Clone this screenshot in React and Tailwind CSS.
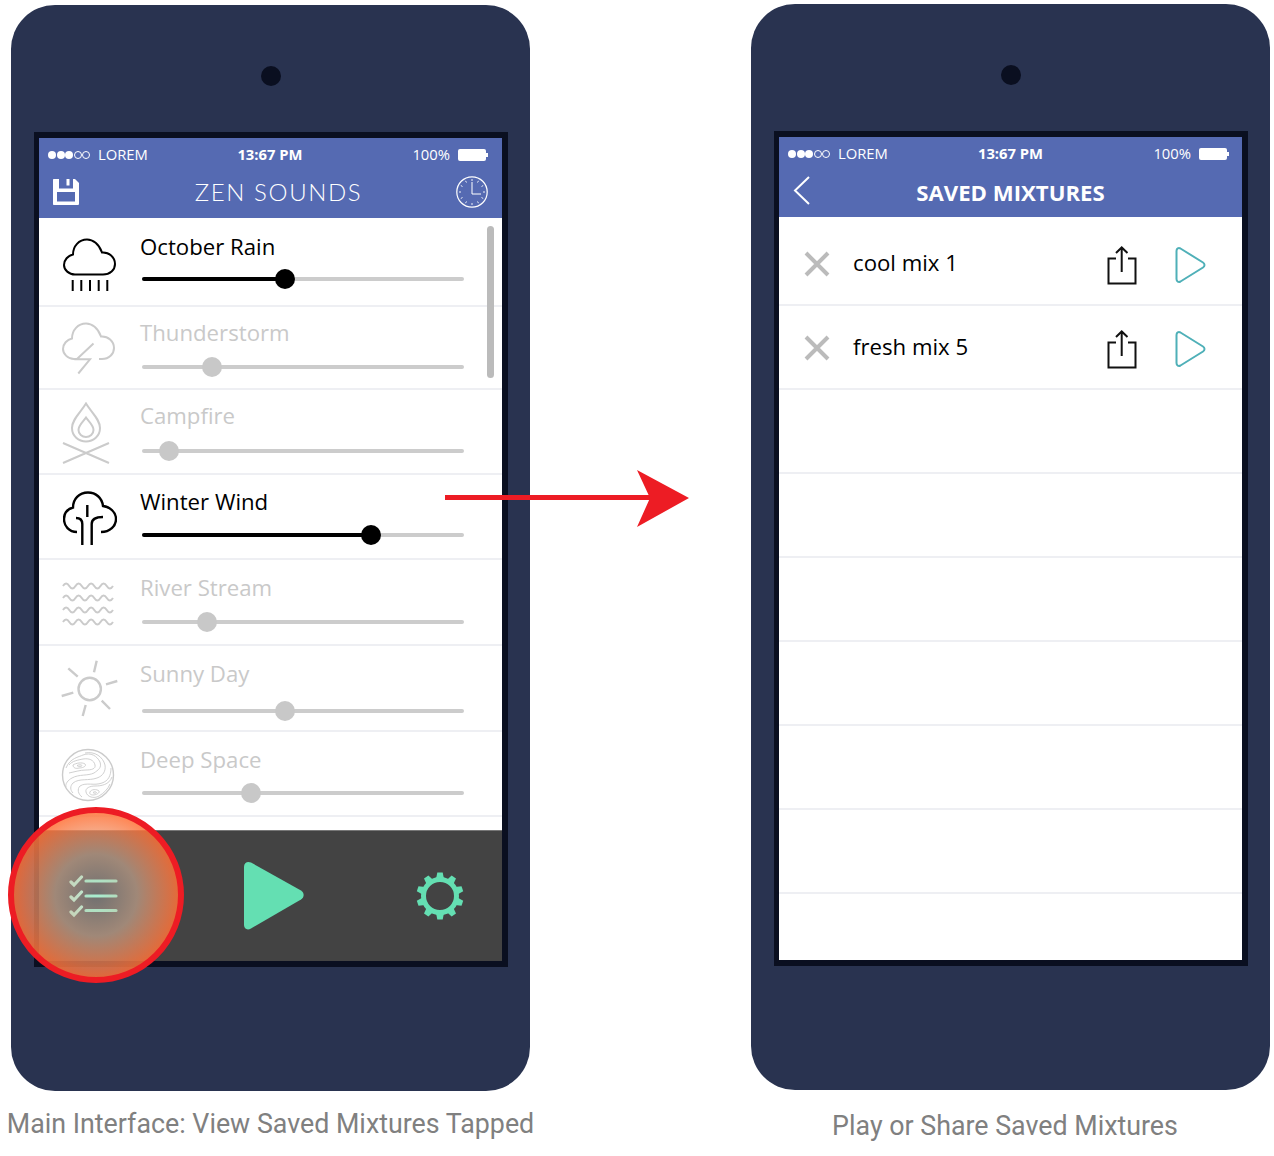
import React from 'react';

const GRAY = '#cbcbcb';

// wavy lines for the river icon
const wave = (y) => `M1 ${y} q3.1 -5 6.25 0 t6.25 0 t6.25 0 t6.25 0 t6.25 0 t6.25 0 t6.25 0 t6.25 0`;

const RainIcon = () => (
  <svg width="54" height="54" viewBox="0 0 54 54" fill="none" stroke="#000" strokeWidth="2">
    <path d="M12 36.5H40C47 36.5 52 32 52 26C52 19 46 14 39 14.5C36 6 30 1.5 24 1.5C16 1.5 10 8 10 16.5C5 17.5 1 22 1 27C1 32 6 36.5 12 36.5Z" />
    <path d="M9.7 42v11M18.3 42v11M27 42v11M35.7 42v11M44.3 42v11" />
  </svg>
);

const StormIcon = () => (
  <svg width="54" height="54" viewBox="0 0 54 54" fill="none" stroke={GRAY} strokeWidth="2">
    <path d="M37 37H40C47 37 52 32 52 26C52 19 46 14 39 14.5C36 6 30 1.5 24 1.5C16 1.5 10 8 10 16.5C5 17.5 1 22 1 27C1 32 6 37 12 37H15" />
    <path d="M31.5 21.5L14.7 37.3H28L16.3 51.5" />
  </svg>
);

const FireIcon = () => (
  <svg width="50" height="64" viewBox="0 0 50 64" fill="none" stroke={GRAY} strokeWidth="2">
    <path d="M25 1.5C20 10 11 17 11 26C11 34 17.5 39.5 25 39.5C32.5 39.5 39 34 39 26C39 17 30 10 25 1.5Z" />
    <path d="M25 15.5C22 20 17.5 23 17.5 28C17.5 32 21 35 25 35C29 35 32.5 32 32.5 28C32.5 23 28 20 25 15.5Z" />
    <path d="M2 41L48 61M48 41L2 61" />
  </svg>
);

const TreeIcon = () => (
  <svg width="54" height="55" viewBox="0 0 54 55" fill="none" stroke="#000" strokeWidth="2.4">
    <path d="M14 41C6 41 1 35 1 28C1 22 5 18 10 16.5C10 8 16 1.5 25 1.5C33 1.5 39 7 40 15C47 16 53 21 53 28C53 35 47 41 38 41" />
    <path d="M19.3 54V33C19.3 29 17 27 13 27M28.7 54V33C28.7 29 32 26 40 26M24.3 14V26" />
  </svg>
);

const RiverIcon = () => (
  <svg width="52" height="48" viewBox="0 0 52 48" fill="none" stroke={GRAY} strokeWidth="2">
    <path d={wave(6)} />
    <path d={wave(18)} />
    <path d={wave(30)} />
    <path d={wave(42)} />
  </svg>
);

const SunIcon = () => (
  <svg width="60" height="60" viewBox="0 0 60 60" fill="none" stroke={GRAY} strokeWidth="2.4">
    <circle cx="29.7" cy="30" r="11.2" />
    <path d="M36.7 1.7L34 13.3M8.3 9.3L17.7 17.7M1.7 37L13.3 33.7M22.7 57L25.7 46M50 50L41.7 41.7M57.3 22L46 25.3" />
  </svg>
);

const PlanetIcon = () => (
  <svg width="54" height="54" viewBox="0 0 54 54" fill="none" stroke={GRAY} strokeWidth="0.9">
    <circle cx="27" cy="27" r="25.5" strokeWidth="1.4" />
    <path d="M5 20C9 10 18 9 22 7C30 4 36 8 39 14C41 20 37 22 33 25C27 28 18 26 11 30C7 32 4 36 5 39" />
    <path d="M8 17C11 13 17 12 22 11C28 10 33 12 34 17C35 21 30 22 25 22C19 22 13 24 8 25" />
    <path d="M12 17C15 15 21 14 24 16C26 18 22 20 18 20C15 21 12 20 12 17Z" />
    <path d="M16 17.500C18 16.500 21 16.500 21 17.500C21 18.500 17 19 16 17.500Z" />
    <path d="M24 5C34 3 42 9 44 17C45 23 42 28 36 30C28 33 18 30 12 35C9 38 9 42 12 45" />
    <path d="M50 20C50 28 47 33 41 35C33 38 25 34 19 38C16 41 17 46 21 49" />
    <path d="M51 29C48 37 40 38 34 38C29 38 24 40 25 44C26 49 33 51 38 48C43 45 47 41 49 36" />
    <path d="M29 44C30 41 36 41 38 43C39 45 35 47 32 47C30 47 28 46 29 44Z" />
    <path d="M32 44.500C33 43.500 35 43.500 35.500 44.500C35 45.500 33 45.500 32 44.500Z" />
  </svg>
);

const channels = [
  { name: 'October Rain', Icon: RainIcon, on: true, thumb: 143, row: 'h-[89px]', icon: 'ml-[24px] mt-[20px]', text: 'pt-[14px]', track: 'mt-[15px]' },
  { name: 'Thunderstorm', Icon: StormIcon, on: false, thumb: 70, row: 'h-[83px]', icon: 'ml-[23px] mt-[15px]', text: 'pt-[11px]', track: 'mt-[17px]' },
  { name: 'Campfire', Icon: FireIcon, on: false, thumb: 27, row: 'h-[85px]', icon: 'ml-[22px] mt-[12px]', text: 'pt-[11px]', track: 'mt-[18px]' },
  { name: 'Winter Wind', Icon: TreeIcon, on: true, thumb: 229, row: 'h-[85px]', icon: 'ml-[24px] mt-[16px]', text: 'pt-[12px]', track: 'mt-[16px]' },
  { name: 'River Stream', Icon: RiverIcon, on: false, thumb: 65, row: 'h-[86px]', icon: 'ml-[23px] mt-[20px]', text: 'pt-[13px]', track: 'mt-[17px]' },
  { name: 'Sunny Day', Icon: SunIcon, on: false, thumb: 143, row: 'h-[86px]', icon: 'ml-[21px] mt-[13px]', text: 'pt-[13px]', track: 'mt-[20px]' },
  { name: 'Deep Space', Icon: PlanetIcon, on: false, thumb: 109, row: 'h-[85px]', icon: 'ml-[22px] mt-[16px]', text: 'pt-[13px]', track: 'mt-[16px]' },
];

const StatusBar = ({ right }) => (
  <div className={`grid h-[34px] grid-cols-3 items-center pb-px pl-[9px] ${right} font-['Open_Sans'] text-[14.8px] text-white`}>
    <div className="flex items-center">
      <div className="flex gap-[0.5px]">
        <span className="h-2 w-2 rounded-full bg-white" />
        <span className="h-2 w-2 rounded-full bg-white" />
        <span className="h-2 w-2 rounded-full bg-white" />
        <span className="h-2 w-2 rounded-full border border-white" />
        <span className="h-2 w-2 rounded-full border border-white" />
      </div>
      <span className="ml-2">LOREM</span>
    </div>
    <div className="pl-[4px] text-center font-bold">13:67 PM</div>
    <div className="flex items-center justify-end">
      <span>100%</span>
      <span className="ml-2 h-[12px] w-[28px] rounded-[2px] bg-white" />
      <span className="h-[4px] w-[2px] bg-white" />
    </div>
  </div>
);

const Slider = ({ on, thumb, className }) => (
  <div className={`relative ml-[2px] h-[4px] w-[322px] rounded-full bg-[#cccccc] ${className}`}>
    {on && <div className="absolute left-0 top-0 h-[4px] rounded-full bg-black" style={{ width: thumb }} />}
    <div
      className={`absolute top-[-8px] ml-[-10px] h-5 w-5 rounded-full ${on ? 'bg-black' : 'bg-[#c8c8c8]'}`}
      style={{ left: thumb }}
    />
  </div>
);

const Channel = ({ name, Icon, on, thumb, row, icon, text, track }) => (
  <div className={`flex border-b-2 border-[#eeeff3] ${row}`}>
    <div className="w-[101px] shrink-0">
      <div className={icon}>
        <Icon />
      </div>
    </div>
    <div className={text}>
      <div className={`font-['Open_Sans'] text-[22.2px] leading-[30px] ${on ? 'text-black' : 'text-[#c9c9c9]'}`}>{name}</div>
      <Slider on={on} thumb={thumb} className={track} />
    </div>
  </div>
);

const Gear = () => (
  <svg width="48" height="48" viewBox="-24 -24 48 48" fill="none">
    <circle r="16.500" stroke="#64dfb2" strokeWidth="5" />
    {[0, 36, 72, 108, 144, 180, 216, 252, 288, 324].map((deg) => (
      <path key={deg} d="M-4 -17L-2.700 -23.500H2.700L4 -17Z" fill="#64dfb2" transform={`rotate(${deg})`} />
    ))}
  </svg>
);

const MainScreen = () => (
  <div className="relative flex h-full flex-col">
    <div className="h-[80px] bg-[#556ab2]">
      <StatusBar right="pr-[14px]" />
      <div className="flex h-[46px] items-center pb-[6px] pl-[13px] pr-[14px]">
        <svg width="28" height="28" viewBox="0 0 28 28">
          <path
            fillRule="evenodd"
            fill="#fff"
            d="M2 1H23L27 5V25.500C27 26.500 26.500 27 25.500 27H2C1.300 27 1 26.500 1 26V2C1 1.300 1.300 1 2 1ZM7 1V10.500H21V1H17.500V7.500H14.500V1ZM5 14V23.500H23V14Z"
          />
        </svg>
        <div className="flex-1 pl-[21px] text-center font-['Lato'] text-[24px] font-light tracking-[1.6px] text-white">
          ZEN SOUNDS
        </div>
        <svg width="32" height="32" viewBox="0 0 32 32" fill="none" stroke="#fff">
          <circle cx="16" cy="16" r="15.200" strokeWidth="1.200" />
          <path d="M16 6V18H25" strokeWidth="1" />
          <path d="M16 3v2M16 27v2M3 16h2M27 16h2M9.500 4.800l1 1.700M22.500 4.800l-1 1.700M9.500 27.200l1-1.700M22.500 27.200l-1-1.700M4.800 9.500l1.700 1M27.200 9.500l-1.700 1M4.800 22.500l1.700-1M27.200 22.500l-1.700-1" strokeWidth="0.900" />
        </svg>
      </div>
    </div>

    <div className="flex-1 bg-white">
      {channels.map((c) => (
        <Channel key={c.name} {...c} />
      ))}
    </div>

    {/* scrollbar */}
    <div className="absolute left-[448px] top-[88px] h-[152px] w-[7px] rounded-full bg-[#bbbbbb]" />

    <div className="flex h-[131px] items-center border-t border-[#777777] bg-[#434343] pl-[30px] pr-[38px]">
      <svg width="49" height="44" viewBox="0 0 49 44" fill="none" strokeLinecap="round">
        <g stroke="#a8ecce" strokeWidth="3.200">
          <path d="M2 8L5 11L12.500 3M2 23L5 26L12.500 18M2 38L5 41L12.500 33" />
        </g>
        <g stroke="#8ce8c2" strokeWidth="3.200">
          <path d="M17 7H47M17 22H47M17 36.500H47" />
        </g>
      </svg>
      <svg className="ml-[125px]" width="62" height="70" viewBox="0 0 62 70">
        <path
          fill="#64dfb2"
          d="M1 6C1 1.500 4.500 0 8 1.500L58 29.500C61.500 32 61.500 36 58 38.500L8 67.500C4.500 69.500 1 68 1 64Z"
        />
      </svg>
      <div className="ml-auto">
        <Gear />
      </div>
    </div>
  </div>
);

const mixes = ['cool mix 1', 'fresh mix 5'];

const MixRow = ({ name, first }) => (
  <div className={`flex items-center border-b-2 border-[#eeeff3] ${first ? 'h-[89px] pt-[5px]' : 'h-[84px]'}`}>
    <svg className="ml-[25px] mt-[2px]" width="26" height="26" viewBox="0 0 26 26" stroke="#bbbbbb" strokeWidth="4">
      <path d="M2 2L24 24M24 2L2 24" />
    </svg>
    <div className="ml-[23px] font-['Open_Sans'] text-[22.2px] leading-[30px] text-black">{name}</div>
    <svg className="ml-auto mt-[4px]" width="30" height="39" viewBox="0 0 30 39" fill="none" stroke="#111" strokeWidth="2">
      <path d="M9 12.500H1.500V37.500H28.500V12.500H21M14.700 26V1.500M9 7L14.700 1.500L20.500 7" />
    </svg>
    <svg className="ml-[38px] mr-[36px] mt-[4px]" width="31" height="37" viewBox="0 0 31 37" fill="none" stroke="#4fb0b8" strokeWidth="2">
      <path d="M1.500 4C1.500 1.500 3.500 0.500 5.500 1.500L28 15.500C30 16.800 30 19 28 20.500L5.500 34.500C3.500 35.500 1.500 34.500 1.500 32Z" />
    </svg>
  </div>
);

const SavedScreen = () => (
  <div className="flex h-full flex-col">
    <div className="h-[80px] bg-[#556ab2]">
      <StatusBar right="pr-[13px]" />
      <div className="flex h-[46px] items-center pb-[2px] pl-[14px] pr-[14px]">
        <svg className="mb-[6px]" width="18" height="30" viewBox="0 0 18 30" fill="none" stroke="#fff" strokeWidth="2">
          <path d="M16 2L2 15.500L16 29" />
        </svg>
        <div className="flex-1 pr-[18px] text-center font-['Open_Sans'] text-[22.2px] font-bold leading-[30px] text-white">
          SAVED MIXTURES
        </div>
      </div>
    </div>
    <div className="flex-1 bg-white">
      {mixes.map((m, i) => (
        <MixRow key={m} name={m} first={i === 0} />
      ))}
      <div className="h-[84px] border-b-2 border-[#eeeff3]" />
      <div className="h-[84px] border-b-2 border-[#eeeff3]" />
      <div className="h-[84px] border-b-2 border-[#eeeff3]" />
      <div className="h-[84px] border-b-2 border-[#eeeff3]" />
      <div className="h-[84px] border-b-2 border-[#eeeff3]" />
      <div className="h-[84px] border-b-2 border-[#eeeff3]" />
    </div>
  </div>
);

const Phone = ({ children }) => (
  <div className="h-[1086px] w-[519px] rounded-[44px] bg-[#293350] pt-[61px]">
    <div className="mx-auto h-5 w-5 rounded-full bg-[#0a0f20]" />
    <div className="ml-[23px] mt-[46px] h-[835px] w-[474px] border-[6px] border-l-[5px] border-[#0a0f20]">{children}</div>
  </div>
);

export default function App() {
  return (
    <div className="relative flex h-[1156px] w-[1274px] gap-[221px] overflow-hidden bg-white pl-[11px] font-['Roboto'] text-[26.8px] text-[#808080]">
      <div className="w-[519px] shrink-0 pt-[5px]">
        <Phone>
          <MainScreen />
        </Phone>
        <div className="mt-[14px] flex justify-center whitespace-nowrap leading-[38px]">
          <span className="shrink-0">Main Interface: View Saved Mixtures Tapped</span>
        </div>
      </div>
      <div className="w-[519px] shrink-0 pt-[4px]">
        <Phone>
          <SavedScreen />
        </Phone>
        <div className="mt-[17px] whitespace-nowrap pr-[11px] text-center leading-[38px]">Play or Share Saved Mixtures</div>
      </div>

      {/* tap highlight */}
      <div className="absolute left-[8px] top-[807px] h-[176px] w-[176px] rounded-full border-[6px] border-[#ed1c24] bg-[radial-gradient(circle_closest-side,rgba(255,255,255,0.24)_0%,rgba(222,182,155,0.6)_50%,rgba(255,114,56,0.85)_100%)]" />

      {/* arrow between the phones */}
      <svg className="absolute left-[445px] top-[465px]" width="250" height="66" viewBox="0 0 250 66" fill="#ed1c24">
        <rect x="0" y="30" width="210" height="5" />
        <path d="M244 33L192 5L205 33L192 62Z" />
      </svg>
    </div>
  );
}
